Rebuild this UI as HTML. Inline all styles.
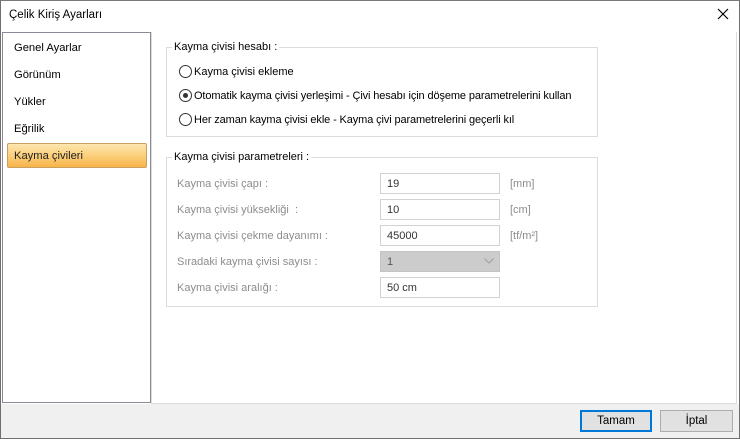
<!DOCTYPE html>
<html><head><style>
*{box-sizing:border-box;margin:0;padding:0}
body{width:740px;height:439px;position:relative;background:#fff;font-family:"Liberation Sans",sans-serif;font-size:11px;color:#000;overflow:hidden}
.a{position:absolute;white-space:nowrap}
.win{left:0;top:0;width:740px;height:439px;border:1px solid #6f6f6f;border-top-color:#7a7a7a}
.title{left:9px;top:9px;font-size:11.5px}
.left{left:2px;top:32px;width:149px;height:371px;border:1px solid #8b8a97;background:#fff}
.item{position:absolute;left:12px;font-size:11.2px}
.sel{left:7px;top:143px;width:140px;height:25px;border:1px solid #c9a060;border-radius:2px;background:linear-gradient(#fde6b0,#fbcf7c 50%,#f7b44a);}
.right{left:151px;top:32px;width:586px;height:372px;border-left:1px solid #dcdcdc;border-right:1px solid #dcdcdc;border-bottom:1px solid #dcdcdc}
.foot{left:1px;top:404px;width:738px;height:34px;background:#f0f0f0}
.grp{border:1px solid #dcdcdc}
.leg{background:#fff;padding:0 2px}
.radio{width:13px;height:13px;border:1px solid #333;border-radius:50%;background:#fff}
.dot{position:absolute;left:3px;top:3px;width:5px;height:5px;border-radius:50%;background:#333}
.lbl{color:#8c8c8c}
.inp{left:380px;width:120px;height:21px;border:1px solid #d2d2d2;background:#fff;padding:4px 0 0 6px;color:#333}
.btn{height:22px;border:1px solid #adadad;background:#e1e1e1;text-align:center;padding-top:4px;font-size:11.5px}
</style></head><body>
<div class="a win"></div>
<div class="a title">Çelik Kiriş Ayarları</div>
<svg class="a" style="left:717px;top:8px" width="12" height="12"><path d="M1 1L11 11M11 1L1 11" stroke="#000" stroke-width="1.2"/></svg>
<div class="a left"></div>
<div class="a sel"></div>
<div class="a item" style="top:42px;left:14px">Genel Ayarlar</div>
<div class="a item" style="top:69px;left:14px">Görünüm</div>
<div class="a item" style="top:96px;left:14px">Yükler</div>
<div class="a item" style="top:123px;left:14px">Eğrilik</div>
<div class="a item" style="top:150px;left:14px;color:#222">Kayma çivileri</div>
<div class="a right"></div>
<div class="a grp" style="left:166px;top:47px;width:432px;height:90px"></div>
<div class="a leg" style="left:172px;top:41px">Kayma çivisi hesabı :</div>
<div class="a radio" style="left:179px;top:65px"></div>
<div class="a" style="left:194px;top:66px">Kayma çivisi ekleme</div>
<div class="a radio" style="left:179px;top:89px"><div class="dot"></div></div>
<div class="a" style="left:194px;top:90px;letter-spacing:-0.12px">Otomatik kayma çivisi yerleşimi - Çivi hesabı için döşeme parametrelerini kullan</div>
<div class="a radio" style="left:179px;top:113px"></div>
<div class="a" style="left:194px;top:114px;letter-spacing:-0.12px">Her zaman kayma çivisi ekle - Kayma çivi parametrelerini geçerli kıl</div>
<div class="a grp" style="left:166px;top:157px;width:432px;height:150px"></div>
<div class="a leg" style="left:172px;top:151px">Kayma çivisi parametreleri :</div>
<div class="a lbl" style="left:177px;top:178px">Kayma çivisi çapı :</div>
<div class="a lbl" style="left:177px;top:204px">Kayma çivisi yüksekliği&nbsp; :</div>
<div class="a lbl" style="left:177px;top:230px">Kayma çivisi çekme dayanımı :</div>
<div class="a lbl" style="left:177px;top:256px">Sıradaki kayma çivisi sayısı :</div>
<div class="a lbl" style="left:177px;top:282px">Kayma çivisi aralığı :</div>
<div class="a inp" style="top:173px">19</div>
<div class="a inp" style="top:199px">10</div>
<div class="a inp" style="top:225px">45000</div>
<div class="a inp" style="top:251px;background:#cccccc;border-color:#c4c4c4;color:#555">1</div>
<svg class="a" style="left:484px;top:258px" width="10" height="6"><path d="M0.5 0.5L5 5L9.5 0.5" stroke="#a0a0a0" fill="none"/></svg>
<div class="a inp" style="top:277px">50 cm</div>
<div class="a lbl" style="left:510px;top:178px">[mm]</div>
<div class="a lbl" style="left:510px;top:204px">[cm]</div>
<div class="a lbl" style="left:510px;top:230px">[tf/m²]</div>
<div class="a foot"></div>
<div class="a btn" style="left:580px;top:410px;width:72px;border:2px solid #0078d7;padding-top:3px">Tamam</div>
<div class="a btn" style="left:660px;top:410px;width:73px">İptal</div>
</body></html>
